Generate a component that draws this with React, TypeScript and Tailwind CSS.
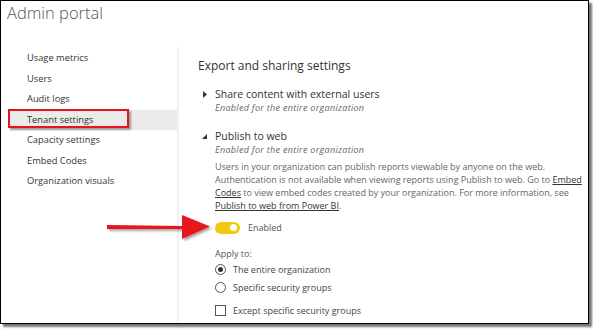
import React from 'react';

const NAV_ITEMS = [
    "Usage metrics",
    "Users",
    "Audit logs",
    "Tenant settings",
    "Capacity settings",
    "Embed Codes",
    "Organization visuals",
];

function Caret({ open }: { open?: boolean }) {
    return (
        <svg width="6" height="7" viewBox="0 0 6 7" className="mt-[4px] shrink-0">
            {open ? (
                <polygon points="0,6 5,6 5,1" fill="#333" />
            ) : (
                <polygon points="1,0 5,3.5 1,7" fill="#333" />
            )}
        </svg>
    );
}

export default function App() {
    return (
        <div className="relative w-[593px] h-[329px] bg-white overflow-hidden" style={{ fontFamily: '"Open Sans", "Noto Sans", sans-serif' }}>
            <div className="w-[589px] h-[324px] border border-black bg-white shadow-[3px_3px_2px_rgba(0,0,0,0.55)] flex flex-col overflow-hidden">
                <div className="h-[46px] pl-[6px] text-[16.5px] font-light text-[#555]">Admin portal</div>

                <div className="flex flex-1 min-h-0">
                    {/* sidebar */}
                    <div className="w-[178px] shrink-0 border-r-[2px] border-[#f0f0f0] pt-[1px] pl-[9px]">
                        <ul className="flex flex-col">
                            {NAV_ITEMS.map((name) => (
                                <li
                                    key={name}
                                    className={
                                        "h-[20.5px] flex items-center pl-[17px] text-[9.3px] text-[#333] " +
                                        (name === "Tenant settings" ? "bg-[#ebebeb]" : "")
                                    }
                                >
                                    {name}
                                </li>
                            ))}
                        </ul>
                    </div>

                    {/* settings */}
                    <div className="flex-1 pl-[19px] pt-[10px] text-[#333]">
                        <div className="text-[12px] leading-[17px]">Export and sharing settings</div>

                        <div className="mt-[13px] flex gap-[7px] pl-[4px]">
                            <Caret />
                            <div>
                                <div className="text-[10.5px] leading-[15px]">Share content with external users</div>
                                <div className="text-[9px] italic text-[#666] leading-[11px] tracking-[0.3px]">Enabled for the entire organization</div>
                            </div>
                        </div>

                        <div className="mt-[16px] flex gap-[7px] pl-[4px]">
                            <Caret open />
                            <div>
                                <div className="text-[10.5px] leading-[15px]">Publish to web</div>
                                <div className="text-[9px] italic text-[#666] leading-[11px] tracking-[0.3px]">Enabled for the entire organization</div>

                                <p className="mt-[5px] text-[9px] leading-[13px] text-[#666] whitespace-nowrap">
                                    Users in your organization can publish reports viewable by anyone on the web.<br />
                                    Authentication is not available when viewing reports using Publish to web. Go to <span className="underline text-[#333]">Embed</span><br />
                                    <span className="underline text-[#333]">Codes</span> to view embed codes created by your organization. For more information, see<br />
                                    <span className="underline text-[#333]">Publish to web from Power BI</span>.
                                </p>

                                <div className="mt-[9px] flex items-center gap-[8px]">
                                    <div className="w-[25px] h-[12px] rounded-full bg-[#f2c811] flex items-center justify-end pr-[3px]">
                                        <div className="w-[7px] h-[7px] rounded-full bg-white" />
                                    </div>
                                    <span className="text-[9px] text-[#555]">Enabled</span>
                                </div>

                                <div className="mt-[12px] text-[9px] leading-[13px] text-[#555]">Apply to:</div>
                                <div className="mt-[1px] flex items-center gap-[7px] h-[18px]">
                                    <div className="w-[11px] h-[11px] rounded-full border border-[#555] flex items-center justify-center">
                                        <div className="w-[5px] h-[5px] rounded-full bg-[#333]" />
                                    </div>
                                    <span className="text-[9px] text-[#444]">The entire organization</span>
                                </div>
                                <div className="flex items-center gap-[7px] h-[18px]">
                                    <div className="w-[11px] h-[11px] rounded-full border border-[#555]" />
                                    <span className="text-[9px] text-[#444]">Specific security groups</span>
                                </div>
                                <div className="mt-[5px] flex items-center gap-[7px] h-[18px]">
                                    <div className="w-[11px] h-[11px] border border-[#555]" />
                                    <span className="text-[9px] text-[#444]">Except specific security groups</span>
                                </div>
                            </div>
                        </div>
                    </div>
                </div>
            </div>

            {/* annotation: red box around Tenant settings */}
            <div className="absolute left-[8px] top-[109px] w-[121px] h-[19px] border-[2px] border-[#e8141b] shadow-[2px_2px_2px_rgba(0,0,0,0.35)]" />

            {/* annotation: red arrow */}
            <svg className="absolute left-[104px] top-[212px]" width="110" height="30" viewBox="0 0 110 30">
                <defs>
                    <filter id="sh" x="-10%" y="-30%" width="130%" height="170%">
                        <feDropShadow dx="2" dy="2" stdDeviation="1.2" floodColor="#000" floodOpacity="0.35" />
                    </filter>
                </defs>
                <polygon points="3,13 78,14 78,3 106,14.5 78,27 78,17 3,17" fill="#e8141b" filter="url(#sh)" />
            </svg>
        </div>
    );
}
